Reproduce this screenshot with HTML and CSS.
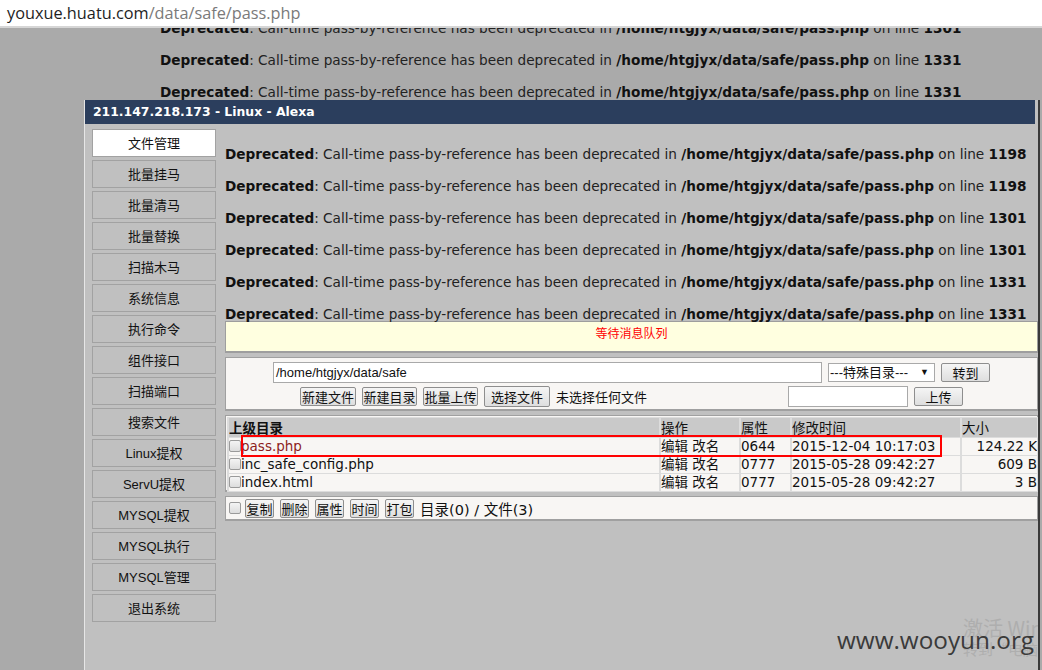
FILE: index.html
```html
<!DOCTYPE html>
<html>
<head>
<meta charset="utf-8">
<link rel="stylesheet" href="styles.css">
</head>
<body>
<div class="addr"><span class="host">youxue.huatu.com</span><span class="path">/data/safe/pass.php</span></div>
<div class="page">
  <div class="bg-msgs">
    <div class="msg"><b>Deprecated</b>: Call-time pass-by-reference has been deprecated in <b>/home/htgjyx/data/safe/pass.php</b> on line <b>1301</b></div>
    <div class="msg"><b>Deprecated</b>: Call-time pass-by-reference has been deprecated in <b>/home/htgjyx/data/safe/pass.php</b> on line <b>1331</b></div>
    <div class="msg"><b>Deprecated</b>: Call-time pass-by-reference has been deprecated in <b>/home/htgjyx/data/safe/pass.php</b> on line <b>1331</b></div>
  </div>

  <div class="win">
    <div class="title">211.147.218.173 - Linux - Alexa</div>
    <div class="body">
      <nav class="menu">
        <div class="mbtn active">文件管理</div>
        <div class="mbtn">批量挂马</div>
        <div class="mbtn">批量清马</div>
        <div class="mbtn">批量替换</div>
        <div class="mbtn">扫描木马</div>
        <div class="mbtn">系统信息</div>
        <div class="mbtn">执行命令</div>
        <div class="mbtn">组件接口</div>
        <div class="mbtn">扫描端口</div>
        <div class="mbtn">搜索文件</div>
        <div class="mbtn">Linux提权</div>
        <div class="mbtn">ServU提权</div>
        <div class="mbtn">MYSQL提权</div>
        <div class="mbtn">MYSQL执行</div>
        <div class="mbtn">MYSQL管理</div>
        <div class="mbtn">退出系统</div>
      </nav>
      <main class="main">
        <div class="msg"><b>Deprecated</b>: Call-time pass-by-reference has been deprecated in <b>/home/htgjyx/data/safe/pass.php</b> on line <b>1198</b></div>
        <div class="msg"><b>Deprecated</b>: Call-time pass-by-reference has been deprecated in <b>/home/htgjyx/data/safe/pass.php</b> on line <b>1198</b></div>
        <div class="msg"><b>Deprecated</b>: Call-time pass-by-reference has been deprecated in <b>/home/htgjyx/data/safe/pass.php</b> on line <b>1301</b></div>
        <div class="msg"><b>Deprecated</b>: Call-time pass-by-reference has been deprecated in <b>/home/htgjyx/data/safe/pass.php</b> on line <b>1301</b></div>
        <div class="msg"><b>Deprecated</b>: Call-time pass-by-reference has been deprecated in <b>/home/htgjyx/data/safe/pass.php</b> on line <b>1331</b></div>
        <div class="msg"><b>Deprecated</b>: Call-time pass-by-reference has been deprecated in <b>/home/htgjyx/data/safe/pass.php</b> on line <b>1331</b></div>

        <div class="notice">等待消息队列</div>

        <div class="panel form">
          <div class="frow">
            <span class="inp path-inp">/home/htgjyx/data/safe</span>
            <span class="sel">---特殊目录---<span class="arrow">▼</span></span>
            <span class="btn wide">转到</span>
          </div>
          <div class="frow">
            <span class="btn w56">新建文件</span>
            <span class="btn w55">新建目录</span>
            <span class="btn w55">批量上传</span>
            <span class="file"><span class="btn choose">选择文件</span><span class="nofile">未选择任何文件</span></span>
            <span class="inp up-inp"></span>
            <span class="btn wide">上传</span>
          </div>
        </div>

        <div class="panel list">
          <table class="files">
            <colgroup>
              <col class="c1"><col class="c2"><col class="c3"><col class="c4"><col class="c5">
            </colgroup>
            <tr class="head">
              <td><b>上级目录</b></td><td>操作</td><td>属性</td><td>修改时间</td><td>大小</td>
            </tr>
            <tr>
              <td><span class="cb"></span><span class="fname red">pass.php</span></td><td>编辑 改名</td><td>0644</td><td>2015-12-04 10:17:03</td><td class="num">124.22 K</td>
            </tr>
            <tr>
              <td><span class="cb"></span><span class="fname">inc_safe_config.php</span></td><td>编辑 改名</td><td>0777</td><td>2015-05-28 09:42:27</td><td class="num">609 B</td>
            </tr>
            <tr>
              <td><span class="cb"></span><span class="fname">index.html</span></td><td>编辑 改名</td><td>0777</td><td>2015-05-28 09:42:27</td><td class="num">3 B</td>
            </tr>
          </table>
          <div class="mark"></div>
        </div>

        <div class="panel actions">
          <span class="cb big"></span>
          <span class="btn sm">复制</span>
          <span class="btn sm">删除</span>
          <span class="btn sm">属性</span>
          <span class="btn sm">时间</span>
          <span class="btn sm">打包</span>
          <span class="count">目录(0) / 文件(3)</span>
        </div>
      </main>
    </div>
  </div>

  <div class="activate">
    <div class="a1">激活 Windows</div>
    <div class="a2">转到“电脑设置”以激活 Windows。</div>
  </div>
  <div class="watermark">www.wooyun.org</div>
</div>
</body>
</html>
```

FILE: styles.css
```css
* { box-sizing: border-box; }
html, body { margin: 0; padding: 0; }
body {
  width: 1042px;
  height: 670px;
  overflow: hidden;
  background: #aaaaaa;
  font-family: "DejaVu Sans", "Noto Sans CJK SC", sans-serif;
}

.addr {
  height: 28px;
  background: #ffffff;
  border-bottom: 2px solid #d6d6d6;
  padding-left: 7px;
  font-family: "Open Sans", "Noto Sans", sans-serif;
  font-size: 16.3px;
  line-height: 27px;
  white-space: nowrap;
}
.host { color: #1e1e1e; }
.path { color: #7a7a7a; }

.page {
  position: relative;
  height: 642px;
  overflow: hidden;
}

.msg {
  padding-top: 17px;
  line-height: 16px;
  height: 32px;
  font-size: 13.65px;
  color: #222;
  white-space: nowrap;
}
.msg b { color: #111; }

.bg-msgs {
  margin-top: -25px;
  padding-left: 160px;
}

.win {
  position: absolute;
  left: 84px;
  top: 72px;
  width: 956px;
  bottom: 0;
  background: #c0c0c0;
  border-left: 1px solid #e6e6e6;
  border-right: 2px solid #3a3a3a;
}

.title {
  height: 24px;
  line-height: 23px;
  background: #2b3e5d;
  color: #ffffff;
  font-weight: bold;
  font-size: 12.4px;
  padding-left: 8px;
  margin-right: 3px;
}

.body {
  display: flex;
  padding: 5px 0 0 7px;
  gap: 9px;
}

.menu {
  width: 124px;
  flex: none;
  display: flex;
  flex-direction: column;
  gap: 3px;
}
.mbtn {
  height: 28px;
  border: 1px solid #a2a2a2;
  background: #c0c0c0;
  text-align: center;
  padding-top: 1px;
  line-height: 26px;
  font-size: 13px;
  font-family: "Liberation Sans", "Noto Sans CJK SC", sans-serif;
  color: #111;
}
.mbtn.active { background: #ffffff; }

.main {
  flex: 1;
  min-width: 0;
  margin-top: -16px;
  padding-top: 16px;
  overflow: hidden;
}

.notice {
  height: 32px;
  background: #ffffe0;
  border: 1px solid #9e9e9e;
  border-width: 1px 1px 2px 1px;
  color: #ff0000;
  text-align: center;
  font-family: "Noto Sans CJK SC", sans-serif;
  font-size: 12px;
  line-height: 16px;
  padding-top: 3px;
}

.panel {
  background: #f8f6f4;
  border: 1px solid #a0a0a0;
  border-width: 1px 1px 2px 1px;
  margin-top: 4px;
}

.form {
  height: 54px;
  padding-top: 3px;
}
.frow {
  display: flex;
  justify-content: center;
  align-items: center;
  gap: 6px;
  height: 22px;
  margin-bottom: 2px;
  font-family: "Liberation Sans", "Noto Sans CJK SC", sans-serif;
  font-size: 13px;
}
.inp {
  display: inline-block;
  height: 21px;
  background: #fff;
  border: 1px solid #a9a9a9;
  line-height: 19px;
  padding-left: 2px;
  color: #111;
}
.path-inp { width: 549px; }
.up-inp { width: 120px; margin-left: 136px; }
.sel {
  position: relative;
  display: inline-block;
  width: 107px;
  height: 19px;
  background: #fff;
  border: 1px solid #a9a9a9;
  font-size: 13px;
  line-height: 17px;
  padding-left: 1px;
  color: #111;
}
.arrow {
  position: absolute;
  right: 5px;
  top: 0;
  font-size: 9px;
}
.btn {
  display: inline-block;
  height: 19px;
  padding: 0 2px;
  border: 1px solid #8e8e8e;
  border-radius: 2px;
  background: linear-gradient(#f5f5f5, #dedede);
  font-size: 13px;
  line-height: 17px;
  color: #111;
  text-align: center;
  white-space: nowrap;
  font-family: "Noto Sans CJK SC", sans-serif;
}
.btn.wide { width: 49px; }
.btn.w56 { width: 56px; padding: 0; }
.btn.w55 { width: 55px; padding: 0; }
.file { display: inline-flex; align-items: center; gap: 6px; }
.btn.choose { width: 66px; height: 21px; line-height: 19px; }
.nofile { width: 90px; white-space: nowrap; font-family: "Noto Sans CJK SC", sans-serif; font-size: 13px; color: #111; }

.list {
  position: relative;
  height: 77px;
  padding: 1px 1px 0 1px;
}
.files {
  border-collapse: separate;
  border-spacing: 2px 1px;
  table-layout: fixed;
  width: 812px;
  background: #dcdcdc;
  font-size: 13.5px;
  color: #111;
  font-family: "DejaVu Sans", "Noto Sans CJK SC", sans-serif;
}
.c1 { width: 430px; }
.c2 { width: 78px; }
.c3 { width: 49px; }
.c4 { width: 168px; }
.c5 { width: 75px; }
.files td {
  height: 17px;
  padding: 0;
  line-height: 17px;
  background: #f8f6f4;
  white-space: nowrap;
  overflow: hidden;
}
.files .head td { height: 19px; line-height: 18px; background: #c9c9c9; }
.files .head td b { font-family: "Noto Sans CJK SC", sans-serif; font-weight: bold; }
.files td.num { text-align: right; }
.fname.red { color: #8d1d1d; }
.cb {
  display: inline-block;
  width: 12px;
  height: 12px;
  border: 1px solid #9a9a9a;
  border-radius: 2px;
  background: linear-gradient(#f4f4f4, #dddddd);
  vertical-align: -1px;
}
.mark {
  position: absolute;
  left: 15px;
  top: 19px;
  width: 701px;
  height: 22px;
  border: 2px solid #ff0000;
}

.actions {
  height: 25px;
  display: flex;
  align-items: center;
  gap: 6px;
  padding-left: 3px;
}
.cb.big { width: 12px; height: 12px; margin-right: -2px; }
.btn.sm { width: 29px; padding: 0; }
.count {
  font-family: "DejaVu Sans", "Noto Sans CJK SC", sans-serif;
  font-size: 14.5px;
  color: #111;
}

.activate {
  position: absolute;
  left: 963px;
  top: 588px;
  width: 75px;
  overflow: hidden;
  white-space: nowrap;
  color: #aeaeae;
  font-family: "Noto Sans CJK SC", sans-serif;
}
.a1 { font-size: 20px; line-height: 24px; }
.a2 { font-size: 15px; line-height: 18px; }

.watermark {
  position: absolute;
  left: 837px;
  top: 595px;
  font-family: "Open Sans", sans-serif;
  font-size: 24.3px;
  color: #3a3a3a;
  white-space: nowrap;
}
```
